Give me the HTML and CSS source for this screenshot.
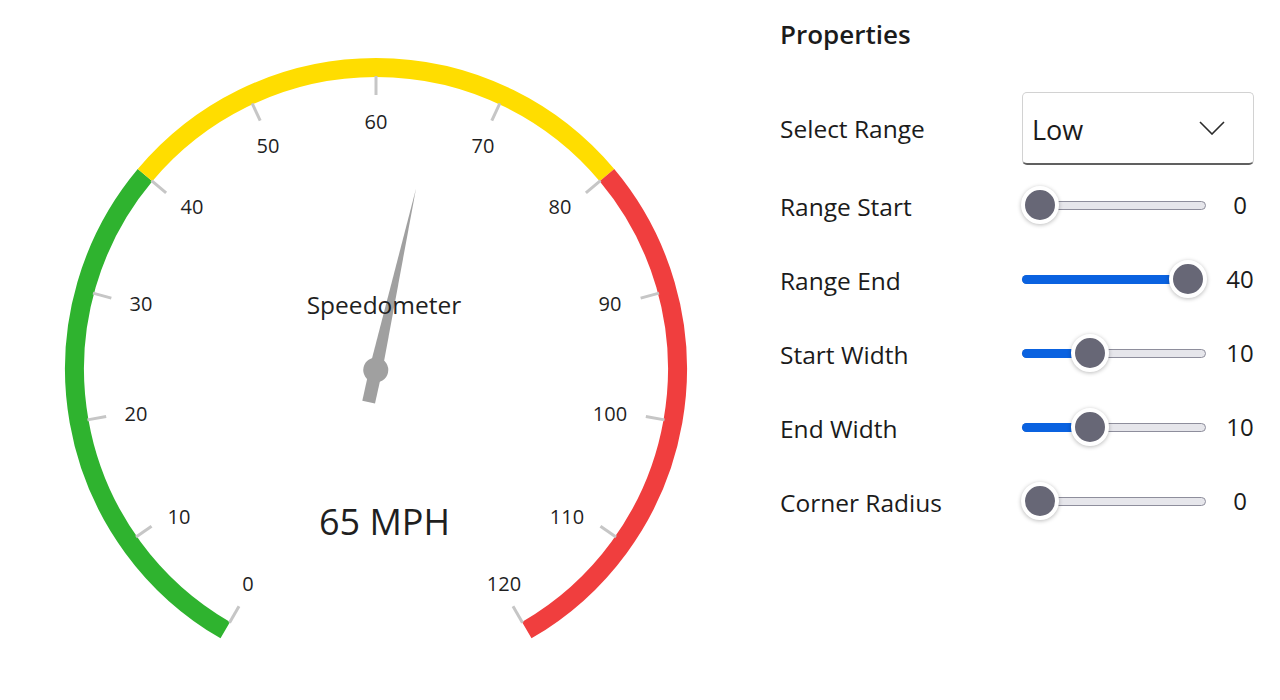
FILE: index.html
```html
<!DOCTYPE html>
<html lang="en">
<head>
<meta charset="utf-8">
<title>Speedometer</title>
<link rel="stylesheet" href="styles.css">
</head>
<body>
<div class="app">
  <div class="gauge-pane">
    <svg class="gauge" width="760" height="700" viewBox="0 0 760 700" xmlns="http://www.w3.org/2000/svg">
      <g class="ranges" fill="none" stroke-width="19">
        <path class="range-low" d="M225.25 630.11 A301.5 301.5 0 0 1 145.04 175.20"/>
        <path class="range-mid" d="M145.04 175.20 A301.5 301.5 0 0 1 606.96 175.20"/>
        <path class="range-high" d="M606.96 175.20 A301.5 301.5 0 0 1 526.75 630.11"/>
      </g>
      <g class="ticks">
        <line x1="376" y1="76" x2="376" y2="95" transform="rotate(-150 376 369)"/>
        <line x1="376" y1="76" x2="376" y2="95" transform="rotate(-125 376 369)"/>
        <line x1="376" y1="76" x2="376" y2="95" transform="rotate(-100 376 369)"/>
        <line x1="376" y1="76" x2="376" y2="95" transform="rotate(-75 376 369)"/>
        <line x1="376" y1="76" x2="376" y2="95" transform="rotate(-50 376 369)"/>
        <line x1="376" y1="76" x2="376" y2="95" transform="rotate(-25 376 369)"/>
        <line x1="376" y1="76" x2="376" y2="95"/>
        <line x1="376" y1="76" x2="376" y2="95" transform="rotate(25 376 369)"/>
        <line x1="376" y1="76" x2="376" y2="95" transform="rotate(50 376 369)"/>
        <line x1="376" y1="76" x2="376" y2="95" transform="rotate(75 376 369)"/>
        <line x1="376" y1="76" x2="376" y2="95" transform="rotate(100 376 369)"/>
        <line x1="376" y1="76" x2="376" y2="95" transform="rotate(125 376 369)"/>
        <line x1="376" y1="76" x2="376" y2="95" transform="rotate(150 376 369)"/>
      </g>
      <g class="labels">
        <text x="248" y="583">0</text>
        <text x="179" y="516">10</text>
        <text x="136" y="413">20</text>
        <text x="141" y="303">30</text>
        <text x="192" y="206">40</text>
        <text x="268" y="145">50</text>
        <text x="376" y="121">60</text>
        <text x="483" y="145">70</text>
        <text x="560" y="206">80</text>
        <text x="610" y="303">90</text>
        <text x="610" y="413">100</text>
        <text x="567" y="516">110</text>
        <text x="504" y="583">120</text>
      </g>
      <g class="needle" transform="rotate(12.5 376 369)">
        <polygon points="369.5,403 382.5,403 382.5,369 376,184 369.5,369"/>
        <circle cx="376" cy="370" r="12.5"/>
      </g>
      <text class="gauge-title" x="384" y="304">Speedometer</text>
      <text class="gauge-value" x="384.5" y="521">65 MPH</text>
    </svg>
  </div>

  <div class="panel">
    <h2 class="title">Properties</h2>

    <div class="row row-select">
      <span class="label">Select Range</span>
      <div class="select">
        <span class="select-text">Low</span>
        <svg class="chevron" width="26" height="14" viewBox="0 0 26 14"><polyline points="1,1 13,13 25,1"/></svg>
      </div>
    </div>

    <div class="row row-slider">
      <span class="label">Range Start</span>
      <div class="slider">
        <div class="track"><div class="fill" style="width:18px"></div></div>
        <div class="thumb" style="left:18px"></div>
      </div>
      <span class="value">0</span>
    </div>

    <div class="row row-slider">
      <span class="label">Range End</span>
      <div class="slider">
        <div class="track"><div class="fill" style="width:166px"></div></div>
        <div class="thumb" style="left:166px"></div>
      </div>
      <span class="value">40</span>
    </div>

    <div class="row row-slider">
      <span class="label">Start Width</span>
      <div class="slider">
        <div class="track"><div class="fill" style="width:68px"></div></div>
        <div class="thumb" style="left:68px"></div>
      </div>
      <span class="value">10</span>
    </div>

    <div class="row row-slider">
      <span class="label">End Width</span>
      <div class="slider">
        <div class="track"><div class="fill" style="width:68px"></div></div>
        <div class="thumb" style="left:68px"></div>
      </div>
      <span class="value">10</span>
    </div>

    <div class="row row-slider">
      <span class="label">Corner Radius</span>
      <div class="slider">
        <div class="track"><div class="fill" style="width:18px"></div></div>
        <div class="thumb" style="left:18px"></div>
      </div>
      <span class="value">0</span>
    </div>
  </div>
</div>
</body>
</html>
```

FILE: styles.css
```css
* { box-sizing: border-box; }

html, body {
  margin: 0;
  padding: 0;
  background: #ffffff;
}

body {
  font-family: "Open Sans", "Noto Sans", sans-serif;
  color: #1b1b1b;
  width: 1280px;
  height: 700px;
  overflow: hidden;
}

.app {
  display: grid;
  grid-template-columns: 780px 474px;
}

.gauge-pane {
  width: 760px;
  height: 700px;
}

.gauge {
  display: block;
}

.range-low { stroke: #2fb32f; }
.range-mid { stroke: #ffdd00; }
.range-high { stroke: #f03e3e; }

.ticks line {
  stroke: #c6c6c6;
  stroke-width: 3;
}

.labels text,
.gauge-title,
.gauge-value {
  font-family: "Open Sans", "Noto Sans", sans-serif;
  fill: #1f1f1f;
  text-anchor: middle;
  dominant-baseline: central;
}

.labels text { font-size: 20px; }
.gauge-title { font-size: 24.5px; }
.gauge-value { font-size: 36px; }

.needle polygon,
.needle circle {
  fill: #a0a0a0;
}

.panel {
  padding-top: 18px;
}

.title {
  margin: 0 0 42px 0;
  font-size: 26px;
  line-height: 32px;
  font-weight: 600;
  color: #1b1b1b;
}

.row {
  display: grid;
  align-items: center;
}

.row-select {
  grid-template-columns: 242px 232px;
  height: 73px;
  margin-bottom: 3px;
}

.row-slider {
  grid-template-columns: 242px 184px 48px;
  height: 74px;
}

.label {
  font-size: 24.5px;
  line-height: 32px;
  padding-top: 3px;
  color: #1b1b1b;
}

.row-select .label {
  padding-top: 1px;
}

.select {
  height: 73px;
  display: flex;
  align-items: center;
  justify-content: space-between;
  padding: 4px 28px 0 9px;
  border: 1px solid #d2d2d2;
  border-bottom: 2px solid #606060;
  border-radius: 5px;
  background: #ffffff;
}

.select-text {
  font-size: 27px;
  line-height: 36px;
  color: #1b1b1b;
}

.chevron {
  margin-top: -4px;
}

.chevron polyline {
  fill: none;
  stroke: #2b2b2b;
  stroke-width: 1.6;
}

.slider {
  position: relative;
  height: 38px;
  display: flex;
  align-items: center;
}

.track {
  position: relative;
  width: 100%;
  height: 9px;
  border: 1px solid #8e8e9c;
  border-radius: 5px;
  background: #e6e6eb;
}

.fill {
  position: absolute;
  left: -1px;
  top: -1px;
  bottom: -1px;
  border-radius: 5px;
  background: #0a62e0;
}

.thumb {
  position: absolute;
  top: 50%;
  width: 38px;
  height: 38px;
  transform: translate(-50%, -50%);
  border-radius: 50%;
  background: #676776;
  border: 4px solid #ffffff;
  box-shadow: 0 1px 4px rgba(0, 0, 0, 0.28);
}

.value {
  justify-self: end;
  width: 28px;
  text-align: center;
  font-size: 24px;
  line-height: 32px;
  color: #1b1b1b;
}
```
